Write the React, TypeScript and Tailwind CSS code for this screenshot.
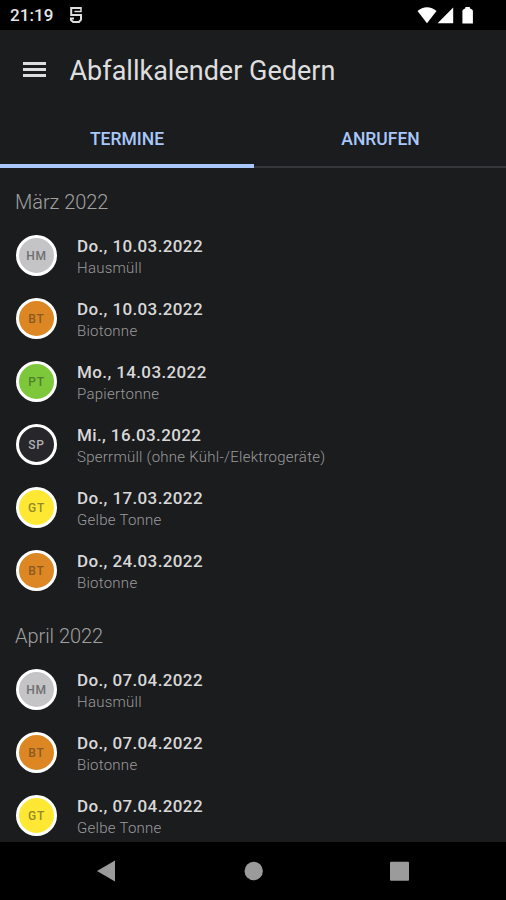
type Pickup = { code: string; date: string; name: string };

const badgeStyles: Record<string, string> = {
  HM: 'bg-[#c4c4c6] text-[#6f6f71]',
  BT: 'bg-[#dc8724] text-[#8a5a22]',
  PT: 'bg-[#7cc83a] text-[#4f7f2c]',
  SP: 'bg-[#26262b] text-[#b0b0b2]',
  GT: 'bg-[#ffe833] text-[#95882a]',
};

const months: { title: string; items: Pickup[] }[] = [
  {
    title: 'März 2022',
    items: [
      { code: 'HM', date: 'Do., 10.03.2022', name: 'Hausmüll' },
      { code: 'BT', date: 'Do., 10.03.2022', name: 'Biotonne' },
      { code: 'PT', date: 'Mo., 14.03.2022', name: 'Papiertonne' },
      { code: 'SP', date: 'Mi., 16.03.2022', name: 'Sperrmüll (ohne Kühl-/Elektrogeräte)' },
      { code: 'GT', date: 'Do., 17.03.2022', name: 'Gelbe Tonne' },
      { code: 'BT', date: 'Do., 24.03.2022', name: 'Biotonne' },
    ],
  },
  {
    title: 'April 2022',
    items: [
      { code: 'HM', date: 'Do., 07.04.2022', name: 'Hausmüll' },
      { code: 'BT', date: 'Do., 07.04.2022', name: 'Biotonne' },
      { code: 'GT', date: 'Do., 07.04.2022', name: 'Gelbe Tonne' },
    ],
  },
];

function StatusBar() {
  return (
    <div className="flex h-[30px] shrink-0 items-center bg-black pl-[10px] text-[#e6e6e6]">
      <span className="w-[59px] pt-px text-[17px] leading-[29px] font-medium tracking-[0.1px]">21:19</span>
      <svg width="14" height="18" viewBox="0 0 14 18" fill="none" stroke="#dedede" strokeWidth="2">
        <path d="M12 2H2.2v6.9H12v4.7l-2 2.4H4.2L2 14v-1.6h3" />
        <path d="M12 1v4.6H5.4" strokeWidth="1.5" />
      </svg>
      <svg className="mr-[31px] ml-auto" width="58" height="18" viewBox="0 0 58 18" fill="#fff">
        <path d="M0.5 5.1C5.8 0 14.2 0 19.5 5.1L10 17.2z" />
        <path d="M36.2 1.6v15.6H20.6z" />
        <path d="M48.4 1h4.4v1.2l2.2 1.2q.9.5.9 1.5v12.5H45.4V4.9q0-1 .9-1.5l2.1-1.2z" />
      </svg>
    </div>
  );
}

function Row({ code, date, name }: Pickup) {
  return (
    <li className="flex h-[63px] items-center">
      <div
        className={`flex size-[41px] shrink-0 items-center justify-center rounded-full border-[3px] border-white text-[12px] font-medium tracking-[0.8px] ${badgeStyles[code]}`}
      >
        <span>{code}</span>
      </div>
      <div className="ml-[20px] whitespace-nowrap">
        <div className="text-[17px] leading-[22px] font-medium tracking-[0.38px] text-[#d8d8d8]">{date}</div>
        <div className="-mb-px pt-px text-[15px] leading-[20px] font-light tracking-[0.26px] text-[#9b9b9c]">{name}</div>
      </div>
    </li>
  );
}

export default function App() {
  return (
    <div className="flex h-[900px] w-[506px] flex-col overflow-hidden bg-[#1b1c1e] font-['Roboto',sans-serif]">
      <StatusBar />
      <header className="flex h-[80px] shrink-0 items-center pl-[23px]">
        <button className="flex w-[23px] flex-col gap-[3px] pb-px" aria-label="Menü">
          <span className="h-[3px] w-full bg-[#dedede]" />
          <span className="h-[3px] w-full bg-[#dedede]" />
          <span className="h-[3px] w-full bg-[#dedede]" />
        </button>
        <h1 className="ml-[23px] pt-[2px] pl-[0.5px] text-[27px] leading-[36px] whitespace-nowrap text-[#dedede]">
          Abfallkalender Gedern
        </h1>
      </header>
      <nav className="grid h-[58px] shrink-0 grid-cols-[254px_252px] text-center text-[17.5px] leading-[58px] font-medium text-[#a9c7fa]">
        <div className="flex flex-col">
          <span className="h-[54px]">TERMINE</span>
          <span className="h-[4px] bg-[#a9c7fa]" />
        </div>
        <div className="flex flex-col">
          <span className="h-[56px] pl-px">ANRUFEN</span>
          <span className="h-[2px] bg-[#34383a]" />
        </div>
      </nav>
      <main className="min-h-0 flex-1 overflow-hidden px-[16px]">
        {months.map((month) => (
          <section key={month.title}>
            <h2 className="-ml-px flex h-[56px] items-end pb-[9px] text-[20px] leading-[26px] font-light tracking-[-0.05px] text-[#a0a0a1]">
              {month.title}
            </h2>
            <ul>
              {month.items.map((item, i) => (
                <Row key={i} {...item} />
              ))}
            </ul>
          </section>
        ))}
      </main>
      <footer className="flex h-[58px] shrink-0 items-center bg-black">
        <svg width="506" height="58" viewBox="0 0 506 58" fill="#9b9b9b">
          <path d="M97 29l18-10.5v21z" />
          <circle cx="253.7" cy="29" r="9.2" />
          <rect x="390" y="19.7" width="19" height="19" rx="1" />
        </svg>
      </footer>
    </div>
  );
}
